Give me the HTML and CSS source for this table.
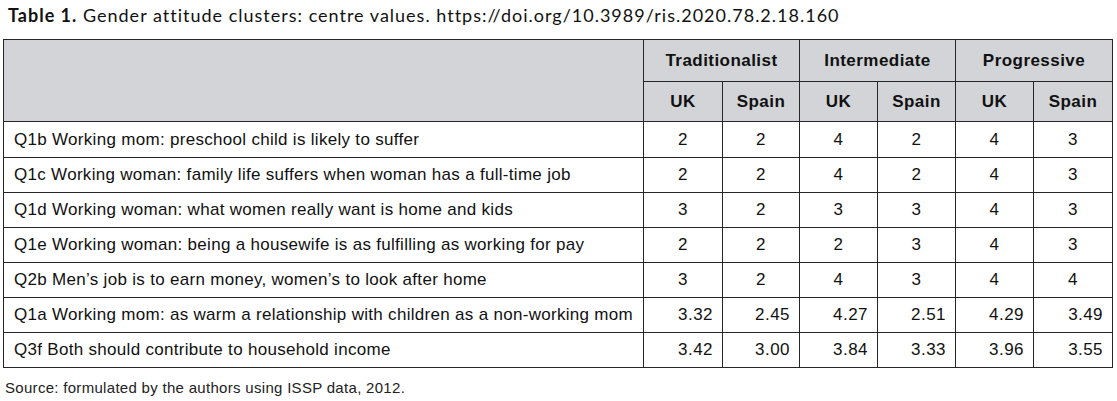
FILE: index.html
```html
<!DOCTYPE html>
<html lang="en">
<head>
<meta charset="utf-8">
<title>Table 1</title>
<link rel="stylesheet" href="styles.css">
</head>
<body>
<div class="page">
  <p class="caption"><b>Table 1.</b> Gender attitude clusters: centre values. https://doi.org/10.3989/ris.2020.78.2.18.160</p>
  <table class="data">
    <colgroup>
      <col class="c-label">
      <col class="c-79"><col class="c-77"><col class="c-78"><col class="c-78"><col class="c-78"><col class="c-79">
    </colgroup>
    <thead>
      <tr class="h1">
        <th rowspan="2"></th>
        <th colspan="2">Traditionalist</th>
        <th colspan="2">Intermediate</th>
        <th colspan="2">Progressive</th>
      </tr>
      <tr class="h2">
        <th>UK</th><th>Spain</th><th>UK</th><th>Spain</th><th>UK</th><th>Spain</th>
      </tr>
    </thead>
    <tbody>
      <tr class="first"><td class="lbl">Q1b Working mom: preschool child is likely to suffer</td><td>2</td><td>2</td><td>4</td><td>2</td><td>4</td><td>3</td></tr>
      <tr><td class="lbl">Q1c Working woman: family life suffers when woman has a full-time job</td><td>2</td><td>2</td><td>4</td><td>2</td><td>4</td><td>3</td></tr>
      <tr><td class="lbl">Q1d Working woman: what women really want is home and kids</td><td>3</td><td>2</td><td>3</td><td>3</td><td>4</td><td>3</td></tr>
      <tr><td class="lbl">Q1e Working woman: being a housewife is as fulfilling as working for pay</td><td>2</td><td>2</td><td>2</td><td>3</td><td>4</td><td>3</td></tr>
      <tr><td class="lbl">Q2b Men’s job is to earn money, women’s to look after home</td><td>3</td><td>2</td><td>4</td><td>3</td><td>4</td><td>4</td></tr>
      <tr class="dec"><td class="lbl">Q1a Working mom: as warm a relationship with children as a non-working mom</td><td>3.32</td><td>2.45</td><td>4.27</td><td>2.51</td><td>4.29</td><td>3.49</td></tr>
      <tr class="dec"><td class="lbl">Q3f Both should contribute to household income</td><td>3.42</td><td>3.00</td><td>3.84</td><td>3.33</td><td>3.96</td><td>3.55</td></tr>
    </tbody>
  </table>
  <p class="source">Source: formulated by the authors using ISSP data, 2012.</p>
</div>
</body>
</html>
```

FILE: styles.css
```css
html, body {
  margin: 0;
  padding: 0;
  background: #ffffff;
}

.page {
  padding: 0 0 0 3px;
  color: #111111;
}

.caption {
  margin: 0;
  padding: 5px 0 0 5px;
  height: 34px;
  box-sizing: border-box;
  font-family: Lato, "Open Sans", sans-serif;
  font-size: 18px;
  letter-spacing: 1px;
  line-height: 20px;
  color: #111111;
  white-space: nowrap;
}

.caption b {
  font-weight: 700;
}

.data {
  border-collapse: collapse;
  table-layout: fixed;
  width: 1110px;
  margin-top: 5px;
  font-family: "Liberation Sans", Arial, sans-serif;
  font-size: 17px;
  letter-spacing: 0.45px;
  color: #111111;
}

.c-label { width: 640px; }
.c-77 { width: 77px; }
.c-78 { width: 78px; }
.c-79 { width: 79px; }

.data th,
.data td {
  border: 1px solid #262626;
  padding: 0;
  vertical-align: middle;
}

.data th {
  background: #d2d4d7;
  font-weight: 700;
  text-align: center;
}

.h1 { height: 42px; }
.h2 { height: 40px; }

.data tbody tr { height: 35px; }
.data tbody tr.first { height: 36px; }

.data td {
  text-align: center;
}

.data td.lbl {
  text-align: left;
  padding-left: 10px;
  letter-spacing: 0.3px;
  white-space: nowrap;
}

.data tr.dec td {
  text-align: right;
  padding-right: 9px;
}

.data tr.dec td.lbl {
  text-align: left;
  padding-right: 0;
}

.source {
  margin: 0;
  padding: 11px 0 0 2px;
  font-family: "Liberation Sans", Arial, sans-serif;
  font-size: 15px;
  letter-spacing: 0.3px;
  line-height: 18px;
  color: #222222;
}
```
